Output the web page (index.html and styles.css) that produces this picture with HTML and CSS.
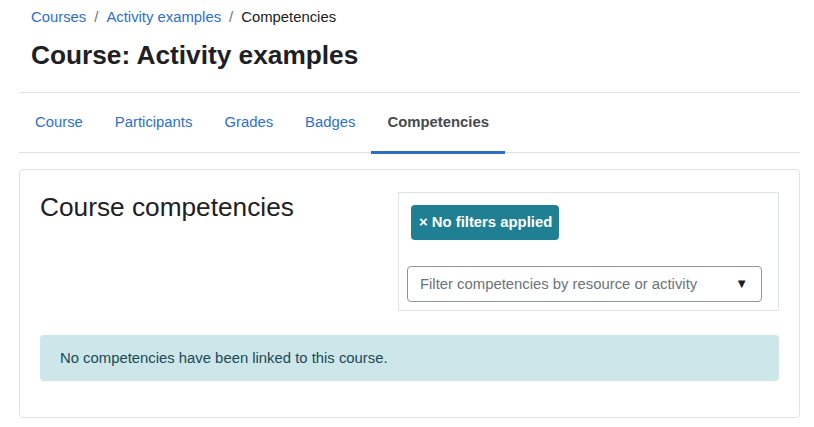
FILE: index.html
```html
<!DOCTYPE html>
<html lang="en">
<head>
<meta charset="utf-8">
<title>Course: Activity examples</title>
<link rel="stylesheet" href="styles.css">
</head>
<body>
<div class="page">
  <header class="page-header">
    <nav class="breadcrumb">
      <a href="#" class="crumb">Courses</a>
      <span class="sep">/</span>
      <a href="#" class="crumb">Activity examples</a>
      <span class="sep">/</span>
      <span class="crumb current">Competencies</span>
    </nav>
    <h1 class="page-title">Course: Activity examples</h1>
  </header>
  <nav class="tabs">
    <a href="#" class="tab">Course</a>
    <a href="#" class="tab">Participants</a>
    <a href="#" class="tab">Grades</a>
    <a href="#" class="tab">Badges</a>
    <a href="#" class="tab active">Competencies</a>
  </nav>
  <section class="card">
    <div class="card-top">
      <h2 class="card-title">Course competencies</h2>
      <div class="filter-box">
        <div class="badge-row"><span class="badge">× No filters applied</span></div>
        <div class="select">
          <span class="select-placeholder">Filter competencies by resource or activity</span>
          <span class="select-arrow">▼</span>
        </div>
      </div>
    </div>
    <div class="alert">No competencies have been linked to this course.</div>
  </section>
</div>
</body>
</html>
```
FILE: styles.css
```css
* { box-sizing: border-box; }
html, body { margin: 0; padding: 0; background: #fff; }
body {
  font-family: "Liberation Sans", Arial, sans-serif;
  font-size: 14.85px;
  line-height: 22.5px;
  color: #1d2125;
}
a { text-decoration: none; color: #2c6fd1; }

.page {
  width: 781px;
  margin-left: 19px;
}

.page-header {
  padding: 6px 12px 0;
  height: 93px;
  border-bottom: 1px solid #dee2e6;
}
.breadcrumb {
  display: flex;
  align-items: center;
  height: 23px;
}
.sep { padding: 0 8px; color: #6a737b; }
.crumb.current { color: #1d2125; }
.page-title {
  margin: 11px 0 0;
  font-size: 26.25px;
  line-height: 1.2;
  font-weight: 700;
}

.tabs {
  display: flex;
  border-bottom: 1px solid #dee2e6;
  height: 60px;
}
.tab {
  display: block;
  padding: 18px 16px 0;
  line-height: 22.5px;
  height: 60px;
  position: relative;
}
.tab.active {
  font-weight: 700;
  color: #45494d;
}
.tab.active::after {
  content: "";
  position: absolute;
  left: 0;
  right: 0;
  bottom: -1px;
  height: 3px;
  background: #2d6cc7;
}

.card {
  margin-top: 16px;
  border: 1px solid #dee2e6;
  border-radius: 4px;
  padding: 20px 20px 16px;
  height: 249px;
}
.card-top {
  display: flex;
  justify-content: space-between;
  align-items: flex-start;
}
.card-title {
  margin: 2px 0 0;
  font-size: 26.25px;
  font-weight: 400;
  line-height: 1.2;
}
.filter-box {
  margin-top: 2px;
  width: 381px;
  border: 1px solid #dee2e6;
  padding: 12px 16px 8px 8px;
}
.badge-row { padding-left: 4px; display: flex; }
.badge {
  display: inline-block;
  background: #1f7f93;
  color: #fff;
  font-weight: 700;
  border-radius: 4px;
  padding: 6px 7px 6px 8px;
  line-height: 23px;
}
.select {
  margin-top: 26px;
  height: 36px;
  border: 1px solid #8f959e;
  border-radius: 4px;
  display: flex;
  align-items: center;
  justify-content: space-between;
  padding: 0 13px 0 12px;
}
.select-placeholder { color: #6a737b; }
.select-arrow { font-size: 13px; color: #1d2125; }

.alert {
  margin-top: 24px;
  background: #cce6ea;
  color: #1a4a55;
  border-radius: 4px;
  padding: 12px 20px;
  line-height: 22px;
}
```
